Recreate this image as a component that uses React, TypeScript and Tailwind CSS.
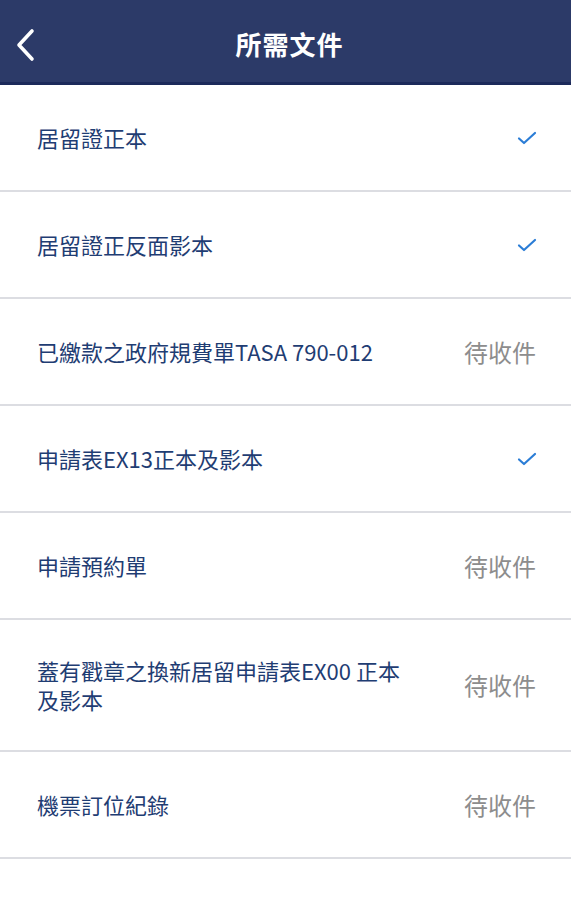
import React from 'react';

type Status = 'done' | 'pending';

interface Doc {
  name: string;
  status: Status;
  tall?: boolean;
}

const docs: Doc[] = [
  { name: '居留證正本', status: 'done' },
  { name: '居留證正反面影本', status: 'done' },
  { name: '已繳款之政府規費單TASA 790-012', status: 'pending' },
  { name: '申請表EX13正本及影本', status: 'done' },
  { name: '申請預約單', status: 'pending' },
  { name: '蓋有戳章之換新居留申請表EX00 正本及影本', status: 'pending', tall: true },
  { name: '機票訂位紀錄', status: 'pending' },
];

const font = { fontFamily: '"Noto Sans CJK TC", "Noto Sans", sans-serif' };

function Check() {
  return (
    <svg width="20" height="16" viewBox="0 0 20 16" fill="none">
      <path d="M2 8.5 L7 13 L18 3" stroke="#2b7dd6" strokeWidth="2.2" strokeLinecap="round" strokeLinejoin="round" />
    </svg>
  );
}

export default function App() {
  return (
    <div className="w-[571px] min-h-[900px] bg-white" style={font}>
      <div className="relative h-[85px] bg-[#2c3a68] border-b-[3px] border-[#1c2a5a] flex items-center justify-center">
        <button className="absolute left-[13px] top-[28px] w-[24px] h-[34px] flex items-center justify-center">
          <svg width="22" height="34" viewBox="0 0 22 34" fill="none">
            <path d="M18 3 L5 17 L18 31" stroke="white" strokeWidth="3.6" strokeLinecap="round" strokeLinejoin="round" />
          </svg>
        </button>
        <h1 className="text-white text-[26px] font-bold tracking-[1px] mt-[4px] ml-[8px]">所需文件</h1>
      </div>
      <ul>
        {docs.map(d => (
          <li
            key={d.name}
            className={
              d.tall
                ? 'flex items-center justify-between border-b-2 border-[#dcdde2] pl-[37px] pr-[36px] py-[36px]'
                : 'flex items-center justify-between border-b-2 border-[#dcdde2] pl-[37px] pr-[36px] min-h-[107px]'
            }
          >
            <span className="text-[22px] leading-[29px] text-[#1f3d73] max-w-[375px]">{d.name}</span>
            {d.status === 'done' ? (
              <span className="mr-[-2px]"><Check /></span>
            ) : (
              <span className="text-[24px] text-[#8d8d8d] shrink-0 mr-[-1px]">待收件</span>
            )}
          </li>
        ))}
      </ul>
    </div>
  );
}
